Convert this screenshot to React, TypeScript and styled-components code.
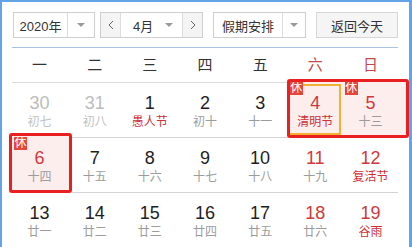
import styled, { createGlobalStyle } from 'styled-components';

const GlobalStyle = createGlobalStyle`
  html, body {
    margin: 0;
    padding: 0;
    background: #fff;
  }
  body {
    font-family: "Liberation Sans", "Noto Sans CJK SC", sans-serif;
    color: #222;
  }
`;

const Frame = styled.div`
  box-sizing: border-box;
  width: 412px;
  height: 247px;
  overflow: hidden;
  background: #fff;
  border: 2px solid #63a3e6;
  border-right-width: 3px;
  border-bottom: none;
  padding: 10px 0 0 10px;
`;

const Toolbar = styled.div`
  display: flex;
  align-items: center;
  height: 26px;
  margin-left: 1px;
  font-size: 13px;
  color: #333;
`;

const Box = styled.div<{ $w: number; $gap?: number }>`
  box-sizing: border-box;
  display: flex;
  align-items: stretch;
  flex-shrink: 0;
  width: ${({ $w }) => $w}px;
  height: 26px;
  margin-right: ${({ $gap }) => $gap ?? 0}px;
  border: 1px solid #cfcfcf;
  background: #fff;
`;

const Label = styled.div<{ $align?: string; $pad?: number }>`
  flex: 1;
  min-width: 0;
  display: flex;
  align-items: center;
  white-space: nowrap;
  justify-content: ${({ $align }) => $align ?? 'center'};
  padding-left: ${({ $pad }) => $pad ?? 0}px;
`;

const ArrowCell = styled.div<{ $w: number; $divider?: boolean }>`
  box-sizing: border-box;
  flex-shrink: 0;
  width: ${({ $w }) => $w}px;
  display: flex;
  align-items: center;
  justify-content: center;
  border-left: ${({ $divider }) => ($divider ? '1px solid #dcdcdc' : 'none')};
`;

const Caret = styled.span`
  width: 0;
  height: 0;
  border-left: 4px solid transparent;
  border-right: 4px solid transparent;
  border-top: 4px solid #9a9a9a;
`;

const StepButton = styled.div<{ $side: 'left' | 'right' }>`
  box-sizing: border-box;
  flex-shrink: 0;
  width: 20px;
  display: flex;
  align-items: center;
  justify-content: center;
  background: #f4f4f4;
  ${({ $side }) =>
    $side === 'left' ? 'border-right: 1px solid #dcdcdc;' : 'border-left: 1px solid #dcdcdc;'}
`;

const TodayButton = styled.div`
  box-sizing: border-box;
  width: 82px;
  height: 26px;
  display: flex;
  align-items: center;
  justify-content: center;
  border: 1px solid #d6d6d6;
  background: #f5f5f5;
  color: #333;
`;

const Table = styled.div`
  width: 386px;
  margin-top: 9px;
  border-top: 1px solid #a8c4e4;
`;

const HeadRow = styled.div`
  display: grid;
  grid-template-columns: repeat(7, 1fr);
  height: 34px;
  border-bottom: 1px solid #dcdcdc;
`;

const HeadCell = styled.div<{ $weekend?: boolean }>`
  text-align: center;
  line-height: 34px;
  font-size: 15px;
  color: ${({ $weekend }) => ($weekend ? '#c4484a' : '#333')};
`;

const WeekRow = styled.div`
  box-sizing: border-box;
  display: grid;
  grid-template-columns: repeat(7, 1fr);
  height: 55px;
  border-bottom: 1px solid #d4d4d4;
`;

const DayCell = styled.div`
  position: relative;
  text-align: center;
  padding-top: 10px;
`;

const DayNum = styled.div<{ $tone: 'normal' | 'muted' | 'red' }>`
  position: relative;
  z-index: 1;
  font-size: 18px;
  line-height: 20px;
  color: ${({ $tone }) =>
    $tone === 'muted' ? '#bcbcbc' : $tone === 'red' ? '#d0393c' : '#1e1e1e'};
`;

const Lunar = styled.div<{ $tone: 'normal' | 'muted' | 'red' }>`
  position: relative;
  z-index: 1;
  font-size: 12px;
  line-height: 16px;
  margin-top: 1px;
  color: ${({ $tone }) =>
    $tone === 'muted' ? '#c2c2c2' : $tone === 'red' ? '#cf3036' : '#9c9c9c'};
`;

type Mark = { span: number; top: number; bottom: number; left: number; right: number };

const HolidayLayer = styled.div<{ $m: Mark; $kind: 'fill' | 'line' }>`
  position: absolute;
  top: ${({ $m }) => $m.top}px;
  bottom: ${({ $m }) => $m.bottom}px;
  left: ${({ $m }) => $m.left}px;
  right: ${({ $m }) => `calc(${-(($m.span - 1) * 100)}% + ${$m.right}px)`};
  box-sizing: border-box;
  border-radius: 3px;
  pointer-events: none;
  ${({ $kind }) =>
    $kind === 'fill'
      ? 'z-index: 0; background: #fdeeee;'
      : 'z-index: 3; border: 3px solid #e8201f;'}
`;

const TodayRing = styled.div`
  position: absolute;
  z-index: 1;
  top: 1px;
  left: 2px;
  right: 2px;
  bottom: 2px;
  border: 2px solid #f2b035;
  border-left: none;
`;

const RestBadge = styled.span`
  position: absolute;
  z-index: 2;
  top: -1px;
  left: 2px;
  width: 13px;
  height: 13px;
  background: #e4463c;
  color: #fff;
  font-size: 12px;
  line-height: 13px;
  text-align: center;
`;

const Chevron = ({ dir }: { dir: 'left' | 'right' }) => (
  <svg width="6" height="10" viewBox="0 0 6 10">
    <polyline
      points={dir === 'left' ? '5,1 1,5 5,9' : '1,1 5,5 1,9'}
      fill="none"
      stroke="#666"
      strokeWidth="1"
    />
  </svg>
);

type Day = {
  n: number;
  lunar: string;
  muted?: boolean;
  red?: boolean;
  fest?: boolean;
  rest?: boolean;
  today?: boolean;
  mark?: Mark;
};

const weekdays = ['一', '二', '三', '四', '五', '六', '日'];

const weeks: Day[][] = [
  [
    { n: 30, lunar: '初七', muted: true },
    { n: 31, lunar: '初八', muted: true },
    { n: 1, lunar: '愚人节', fest: true },
    { n: 2, lunar: '初十' },
    { n: 3, lunar: '十一' },
    {
      n: 4,
      lunar: '清明节',
      red: true,
      fest: true,
      rest: true,
      today: true,
      mark: { span: 2, top: -4, bottom: -1, left: -1, right: -11 },
    },
    { n: 5, lunar: '十三', red: true, rest: true },
  ],
  [
    {
      n: 6,
      lunar: '十四',
      red: true,
      rest: true,
      mark: { span: 1, top: -5, bottom: -1, left: -3, right: -5 },
    },
    { n: 7, lunar: '十五' },
    { n: 8, lunar: '十六' },
    { n: 9, lunar: '十七' },
    { n: 10, lunar: '十八' },
    { n: 11, lunar: '十九', red: true },
    { n: 12, lunar: '复活节', red: true, fest: true },
  ],
  [
    { n: 13, lunar: '廿一' },
    { n: 14, lunar: '廿二' },
    { n: 15, lunar: '廿三' },
    { n: 16, lunar: '廿四' },
    { n: 17, lunar: '廿五' },
    { n: 18, lunar: '廿六', red: true },
    { n: 19, lunar: '谷雨', red: true, fest: true },
  ],
];

export default function App() {
  return (
    <>
      <GlobalStyle />
      <Frame>
        <Toolbar>
          <Box $w={82} $gap={5}>
            <Label>2020年</Label>
            <ArrowCell $w={27} $divider>
              <Caret />
            </ArrowCell>
          </Box>
          <Box $w={103} $gap={10}>
            <StepButton $side="left">
              <Chevron dir="left" />
            </StepButton>
            <Label $align="flex-start" $pad={12}>
              4月
            </Label>
            <ArrowCell $w={26}>
              <Caret />
            </ArrowCell>
            <StepButton $side="right">
              <Chevron dir="right" />
            </StepButton>
          </Box>
          <Box $w={93} $gap={10}>
            <Label>假期安排</Label>
            <ArrowCell $w={23} $divider>
              <Caret />
            </ArrowCell>
          </Box>
          <TodayButton>返回今天</TodayButton>
        </Toolbar>

        <Table>
          <HeadRow>
            {weekdays.map((w, i) => (
              <HeadCell key={w} $weekend={i >= 5}>
                {w}
              </HeadCell>
            ))}
          </HeadRow>
          {weeks.map((week, wi) => (
            <WeekRow key={wi}>
              {week.map((d) => (
                <DayCell key={d.n}>
                  {d.mark && (
                    <>
                      <HolidayLayer $m={d.mark} $kind="fill" />
                      <HolidayLayer $m={d.mark} $kind="line" />
                    </>
                  )}
                  {d.today && <TodayRing />}
                  {d.rest && <RestBadge>休</RestBadge>}
                  <DayNum $tone={d.muted ? 'muted' : d.red ? 'red' : 'normal'}>{d.n}</DayNum>
                  <Lunar $tone={d.muted ? 'muted' : d.fest ? 'red' : 'normal'}>{d.lunar}</Lunar>
                </DayCell>
              ))}
            </WeekRow>
          ))}
        </Table>
      </Frame>
    </>
  );
}
